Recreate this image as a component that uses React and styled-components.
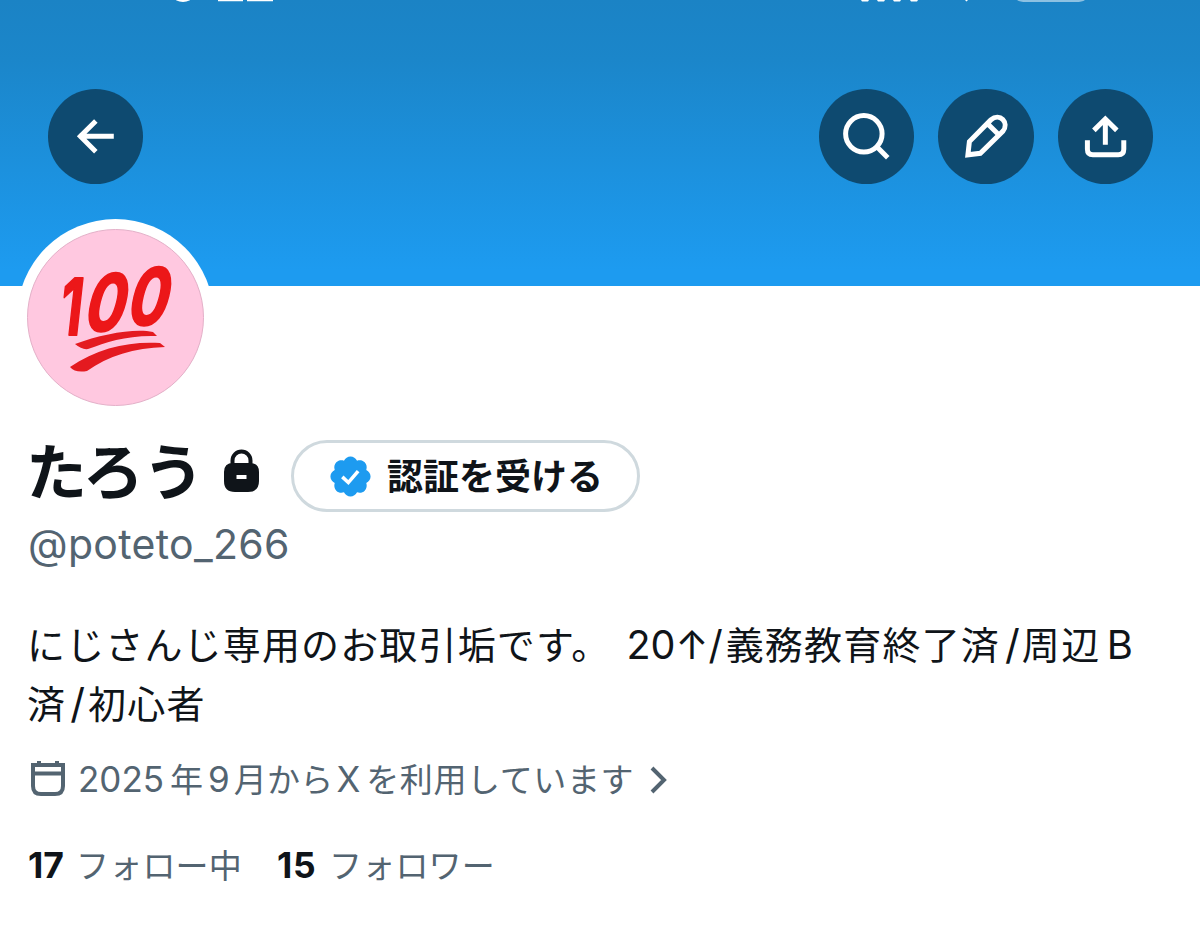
import React from "react";
import styled, { createGlobalStyle } from "styled-components";

const Global = createGlobalStyle`
  * { box-sizing: border-box; }
  body { margin: 0; background: #fff; }
`;

const Page = styled.main`
  width: 1200px;
  height: 937px;
  overflow: hidden;
  background: #fff;
  color: #0f1419;
  font-family: Inter, "Noto Sans CJK JP", sans-serif;
`;

const Banner = styled.header`
  height: 286px;
  background: linear-gradient(#1b83c5 0, #1b86ca 60px, #1d9bf0 270px);
`;

const StatusBar = styled.svg`
  display: block;
  width: 1200px;
  height: 4px;
`;

const Toolbar = styled.nav`
  display: flex;
  gap: 24.3px;
  padding: 84.7px 47px 0 48px;
`;

const RoundButton = styled.button`
  width: 95.2px;
  height: 95.2px;
  padding: 0;
  border: 0;
  border-radius: 50%;
  background: #0e4a70;
  margin-right: ${(p) => (p.$push ? "auto" : "0")};
  svg { display: block; width: 100%; height: 100%; }
`;

const Avatar = styled.div`
  position: relative;
  width: 197px;
  height: 197px;
  margin: -67px 0 0 17px;
  padding: 10px;
  border-radius: 50%;
  background: #fff;
  svg { display: block; width: 177px; height: 177px; }
`;

const Digit = styled.text`
  font: italic 700 79px Inter, sans-serif;
  fill: #ec1719;
  stroke: #ec1719;
  stroke-width: 2;
  stroke-linejoin: round;
`;

const NameRow = styled.div`
  display: flex;
  align-items: center;
  height: 72px;
  margin-top: 24px;
  padding-left: 26px;
`;

const Name = styled.h1`
  margin: -6px 0 0;
  width: 196px;
  font-size: 61px;
  font-weight: 700;
  line-height: 72px;
  letter-spacing: -0.7px;
  white-space: nowrap;
`;

const Lock = styled.svg`
  width: 38px;
  height: 46px;
  margin: -10px 0 0 0;
`;

const VerifyButton = styled.button`
  display: flex;
  align-items: center;
  gap: 13px;
  width: 349px;
  height: 72px;
  margin-left: 31px;
  padding: 0 0 0 33px;
  border: 3px solid #cfd9de;
  border-radius: 36px;
  background: #fff;
  color: #0f1419;
  font: 700 36px/60px Inter, "Noto Sans CJK JP", sans-serif;
  white-space: nowrap;
  svg { width: 47px; height: 47px; flex: none; }
`;

const VerifyLabel = styled.span`
  padding-top: 2px;
`;

const Handle = styled.p`
  margin: 8px 0 0 28px;
  font-size: 41px;
  line-height: 48px;
  letter-spacing: 0.3px;
  color: #536471;
`;

const Bio = styled.p`
  margin: 47px 0 0 27px;
  font-size: 38px;
  line-height: 58px;
  white-space: nowrap;
`;

const Run = styled.span`
  font-size: ${(p) => p.$size || "inherit"};
  letter-spacing: ${(p) => p.$track || 0}px;
  margin-left: ${(p) => p.$before || 0}px;
`;

const Joined = styled.div`
  display: flex;
  align-items: center;
  height: 48px;
  margin: 21px 0 0 28px;
  font-size: 33px;
  color: #536471;
  white-space: nowrap;
`;

const Calendar = styled.svg`
  width: 40px;
  height: 40px;
  margin: 1px 10px 0 0;
`;

const Chevron = styled.svg`
  width: 20px;
  height: 30px;
  margin: 3px 0 0 15px;
`;

const Stats = styled.div`
  display: flex;
  align-items: baseline;
  height: 48px;
  margin: 40px 0 0 28px;
  line-height: 48px;
  white-space: nowrap;
`;

const Count = styled.strong`
  font-size: 35.5px;
  font-weight: 700;
  letter-spacing: ${(p) => p.$track || 0}px;
  width: ${(p) => p.$width}px;
`;

const StatLabel = styled.span`
  font-size: 33px;
  letter-spacing: 0.2px;
  color: #536471;
  width: ${(p) => p.$width}px;
`;

const line = { fill: "none", stroke: "#fff", strokeWidth: 5 };

export default function App() {
  return (
    <Page>
      <Global />
      <Banner>
        <StatusBar viewBox="0 0 1200 4" fill="#fff">
          <ellipse cx="183" cy="-3" rx="9" ry="5" />
          <path d="M218 0h25v1.3h-25zM247 0h26v1.3h-26z" />
          <path d="M861 0h8l-1 1.5h-6zM877 0h8l-1 1.5h-6zM893 0h8l-1 1.5h-6zM910 0h8l-1 1.5h-6zM965 0h3l-1.5 1.5z" />
          <path d="M1017 0h68q-3 2-9 2h-50q-6 0-9-2z" opacity=".5" />
        </StatusBar>
        <Toolbar>
          <RoundButton $push aria-label="戻る">
            <svg viewBox="0 0 95.5 95.5" {...line}>
              <path d="M66 47.5H31M48 32L32.500 47.500L48 63" />
            </svg>
          </RoundButton>
          <RoundButton aria-label="検索">
            <svg viewBox="0 0 95.5 95.5" {...line}>
              <circle cx="45" cy="45" r="18.300" />
              <path d="M57.500 57.500L69 69" />
            </svg>
          </RoundButton>
          <RoundButton aria-label="編集">
            <svg viewBox="0 0 95.5 95.5" {...line}>
              <path d="M30 66L31.500 52.700L53 31C62 23 72 34 65 42.500L42.500 64.500Z M49.500 34.500L61.500 46.500" />
            </svg>
          </RoundButton>
          <RoundButton aria-label="共有">
            <svg viewBox="0 0 95.5 95.5" {...line}>
              <path d="M47.500 56V30M36 41.500L47.500 30L59 41.500M29.500 51.500V60.500Q29.500 66 35 66H60.500Q66 66 66 60.500V51.500" />
            </svg>
          </RoundButton>
        </Toolbar>
      </Banner>

      <Avatar>
        <svg viewBox="0 0 177 177">
          <circle cx="88.500" cy="88.500" r="88" fill="#ffc8e0" stroke="#e3b0c8" />
          <Digit transform="translate(33 106) scale(.66 1)">1</Digit>
          <Digit transform="translate(57 102) skewX(-7) scale(.75 1)">0</Digit>
          <Digit transform="translate(100 96) skewX(-7) scale(.75 1)">0</Digit>
          <g fill="#e41a20">
            <path d="M48 115C75 105 108 99 126 103L130 107C100 106 80 113 61 120Q55 121 48 115Z" />
            <path d="M43 138C70 119 103 112 133 114L138 118C107 119 81 127 60 142Q48 144 43 138Z" />
          </g>
        </svg>
      </Avatar>

      <NameRow>
        <Name>たろう</Name>
        <Lock viewBox="0 0 38 46" fill="none">
          <path d="M10.500 17V12.500a9 9 0 0 1 18 0V17" stroke="#0f1419" strokeWidth="4" />
          <path d="M11 15H28Q37 15 37 24V33Q37 44 26 44H13Q2 44 2 33V24Q2 15 11 15ZM14.500 27V31H24.500V27Z" fill="#0f1419" fillRule="evenodd" />
        </Lock>
        <VerifyButton>
          <svg viewBox="0 0 24 24">
            <path
              fill="#1d9bf0"
              d="M22.250 12c0-1.430-.88-2.670-2.190-3.340.46-1.390.2-2.900-.81-3.910s-2.520-1.270-3.910-.81c-.66-1.310-1.910-2.190-3.340-2.190s-2.670.88-3.330 2.190c-1.400-.46-2.910-.2-3.920.81s-1.260 2.520-.8 3.910c-1.310.67-2.200 1.910-2.200 3.340s.89 2.670 2.200 3.340c-.46 1.390-.21 2.900.8 3.910s2.520 1.260 3.910.81c.67 1.310 1.910 2.190 3.340 2.190s2.680-.88 3.340-2.190c1.390.45 2.900.2 3.910-.81s1.270-2.520.81-3.910c1.310-.67 2.190-1.910 2.190-3.340z"
            />
            <path d="M7.800 12.200L10.900 15.100L15.900 9.200" fill="none" stroke="#fff" strokeWidth="1.8" />
          </svg>
          <VerifyLabel>認証を受ける</VerifyLabel>
        </VerifyButton>
      </NameRow>
      <Handle>@poteto_266</Handle>

      <Bio>
        <Run $track={1.15}>にじさんじ専用のお取引垢です。</Run>
        <Run $size="39.5px" $before={16}>20↑/</Run>
        <Run $track={1.2} $before={3}>義務教育終了済</Run>
        <Run $size="41px" $before={5}>/</Run>
        <Run $track={1.4} $before={2}>周辺</Run>
        <Run $size="40px" $before={6}>B</Run>
        <br />
        <Run $track={1.2}>済</Run>
        <Run $size="41px" $before={4}>/</Run>
        <Run $track={1.2} $before={3}>初心者</Run>
      </Bio>

      <Joined>
        <Calendar viewBox="0 0 40 40" fill="none" stroke="#536471" strokeWidth="4">
          <path d="M5 6H35V27Q35 35 27 35H13Q5 35 5 27ZM5 14.500H35M11 2V6M29 2V6" />
        </Calendar>
        <span>
          <Run $size="35px">2025</Run>
          <Run $before={6}>年</Run>
          <Run $size="35px" $before={5}>9</Run>
          <Run $track={0.2} $before={4}>月から</Run>
          <Run $size="35px" $before={3}>X</Run>
          <Run $track={0.6} $before={6}>を利用しています</Run>
        </span>
        <Chevron viewBox="0 0 20 30" fill="none" stroke="#536471" strokeWidth="4">
          <path d="M3 3L15 15L3 27" />
        </Chevron>
      </Joined>

      <Stats>
        <Count $width={48}>17</Count>
        <StatLabel $width={201}>フォロー中</StatLabel>
        <Count $width={52} $track={0.8}>15</Count>
        <StatLabel>フォロワー</StatLabel>
      </Stats>
    </Page>
  );
}
